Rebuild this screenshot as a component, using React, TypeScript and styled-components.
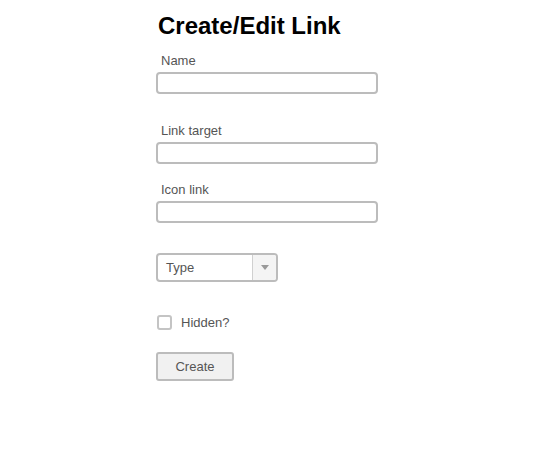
import React from 'react';
import styled, { createGlobalStyle } from 'styled-components';

const GlobalStyle = createGlobalStyle`
  body {
    margin: 0;
    background: #fff;
    font-family: "Liberation Sans", Arial, sans-serif;
  }
`;

const Page = styled.div`
  padding: 12px 0 0 156px;
  width: 222px;
  display: flex;
  flex-direction: column;
`;

const Title = styled.h1`
  margin: 0 0 0 2px;
  font-size: 24px;
  line-height: 28px;
  font-weight: bold;
  color: #000;
`;

const Field = styled.div<{ top: number }>`
  display: flex;
  flex-direction: column;
  margin-top: ${(p) => p.top}px;
`;

const Label = styled.label`
  font-size: 13px;
  line-height: 16px;
  color: #555;
  padding-left: 5px;
  margin-bottom: 3px;
`;

const TextInput = styled.input`
  box-sizing: border-box;
  width: 222px;
  height: 22px;
  border: 2px solid #bcbcbc;
  border-radius: 4px;
  padding: 0 6px;
  font: inherit;
  font-size: 13px;
  outline: none;
`;

const Select = styled.div`
  box-sizing: border-box;
  display: flex;
  width: 122px;
  height: 29px;
  margin-top: 30px;
  border: 2px solid #bcbcbc;
  border-radius: 4px;
  overflow: hidden;
`;

const SelectValue = styled.div`
  flex: 1;
  display: flex;
  align-items: center;
  padding-left: 8px;
  font-size: 13px;
  color: #555;
`;

const SelectArrow = styled.div`
  width: 23px;
  border-left: 1px solid #d0d0d0;
  background: #f4f4f4;
  display: flex;
  align-items: center;
  justify-content: center;
`;

const CheckRow = styled.label`
  display: flex;
  align-items: center;
  gap: 9px;
  margin-top: 33px;
  font-size: 13px;
  color: #555;
`;

const Box = styled.span`
  box-sizing: border-box;
  width: 15px;
  height: 15px;
  border: 2px solid #c4c4c4;
  border-radius: 3px;
  margin-left: 1px;
`;

const Button = styled.button`
  box-sizing: border-box;
  width: 78px;
  height: 29px;
  margin-top: 22px;
  background: #f1f1f1;
  border: 2px solid #bcbcbc;
  border-radius: 3px;
  font-family: inherit;
  font-size: 13px;
  color: #555;
  padding: 0;
`;

export default function App() {
  return (
    <>
      <GlobalStyle />
      <Page>
        <Title>Create/Edit Link</Title>
        <Field top={13}>
          <Label>Name</Label>
          <TextInput />
        </Field>
        <Field top={29}>
          <Label>Link target</Label>
          <TextInput />
        </Field>
        <Field top={18}>
          <Label>Icon link</Label>
          <TextInput />
        </Field>
        <Select>
          <SelectValue>Type</SelectValue>
          <SelectArrow>
            <svg width="8" height="5" viewBox="0 0 8 5">
              <path d="M0 0 L8 0 L4 5 Z" fill="#999" />
            </svg>
          </SelectArrow>
        </Select>
        <CheckRow>
          <Box />
          Hidden?
        </CheckRow>
        <div>
          <Button>Create</Button>
        </div>
      </Page>
    </>
  );
}
